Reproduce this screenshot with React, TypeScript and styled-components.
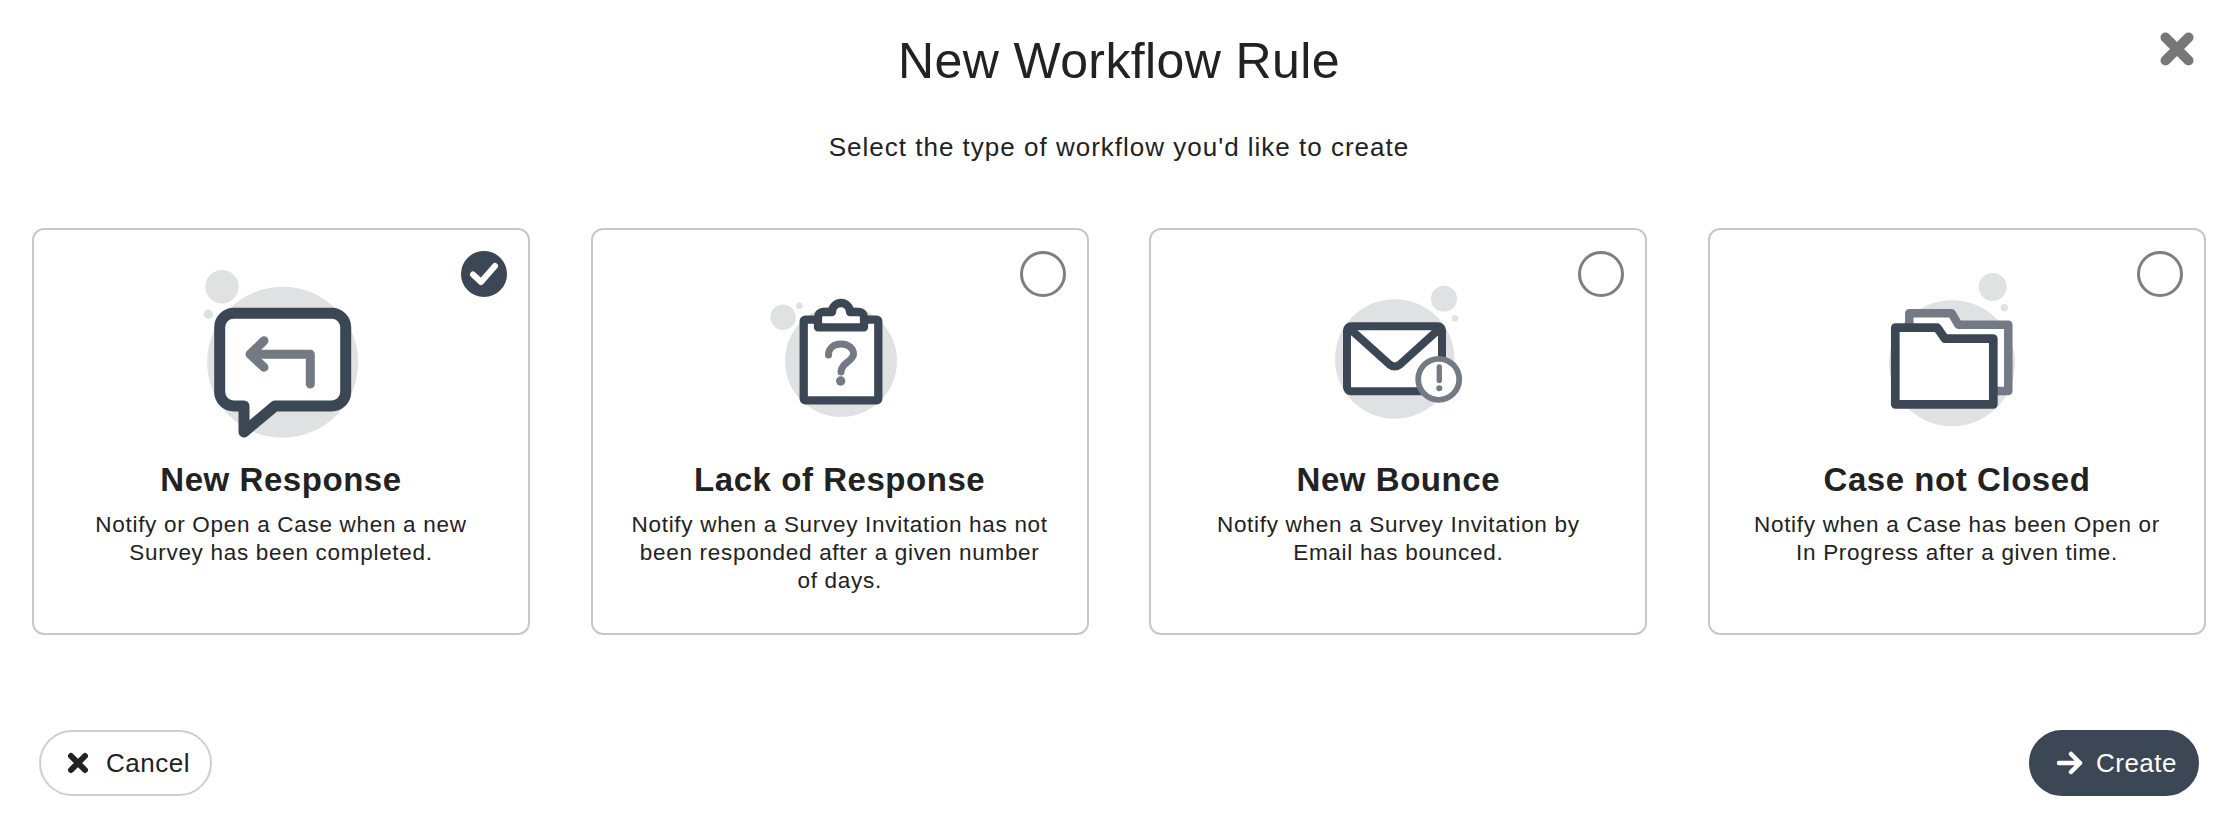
import React from 'react';
import styled, { createGlobalStyle } from 'styled-components';

const dark = '#3b4754';
const mid = '#737a83';
const light = '#dfe1e3';

const GlobalStyle = createGlobalStyle`
  html, body {
    margin: 0;
    padding: 0;
    background: #fff;
  }

  body {
    font-family: "Liberation Sans", Arial, sans-serif;
    color: #222;
  }
`;

const Page = styled.div`
  position: relative;
  width: 2238px;
  height: 822px;
  box-sizing: border-box;
  padding: 0 32px;
  display: flex;
  flex-direction: column;
  overflow: hidden;
`;

const Title = styled.h1`
  margin: 0;
  padding-top: 31px;
  font-size: 50px;
  line-height: 60px;
  font-weight: 400;
  text-align: center;
  letter-spacing: 0.4px;
`;

const Subtitle = styled.p`
  margin: 40px 0 0;
  font-size: 26px;
  line-height: 32px;
  text-align: center;
  letter-spacing: 1px;
`;

const CloseButton = styled.button`
  position: absolute;
  top: 28px;
  right: 40px;
  width: 42px;
  height: 42px;
  padding: 0;
  border: 0;
  background: none;
  display: flex;
  align-items: center;
  justify-content: center;
`;

const Cards = styled.div`
  margin-top: 65px;
  display: grid;
  grid-template-columns: repeat(4, 498px);
  justify-content: space-between;
`;

const Card = styled.div`
  position: relative;
  height: 407px;
  box-sizing: border-box;
  padding: 28px 36px 0;
  border: 2px solid #c8c8c8;
  border-radius: 12px;
  display: flex;
  flex-direction: column;
  align-items: center;
`;

const Art = styled.svg`
  flex: none;
  display: block;
`;

const Radio = styled.span<{ $checked?: boolean }>`
  position: absolute;
  top: 21px;
  right: 21px;
  width: 46px;
  height: 46px;
  box-sizing: border-box;
  border-radius: 50%;
  border: 3px solid ${(p) => (p.$checked ? dark : '#7f7f7f')};
  background: ${(p) => (p.$checked ? dark : '#fff')};
  display: flex;
  align-items: center;
  justify-content: center;
`;

const CardTitle = styled.h2`
  margin: 12px 0 0;
  font-size: 33px;
  line-height: 40px;
  font-weight: 700;
  text-align: center;
  letter-spacing: 0.55px;
`;

const CardText = styled.p`
  margin: 11px 0 0;
  font-size: 22.5px;
  line-height: 28px;
  text-align: center;
  letter-spacing: 0.7px;
`;

const Footer = styled.div`
  margin-top: 95px;
  padding: 0 7px;
  display: flex;
  justify-content: space-between;
  align-items: center;
`;

const Button = styled.button<{ $primary?: boolean }>`
  height: 66px;
  box-sizing: border-box;
  padding: ${(p) => (p.$primary ? '0 20px 0 26px' : '0 20px 0 26px')};
  border-radius: 33px;
  border: 2px solid ${(p) => (p.$primary ? dark : '#cfcfcf')};
  background: ${(p) => (p.$primary ? dark : '#fff')};
  color: ${(p) => (p.$primary ? '#fff' : '#222')};
  font-family: inherit;
  font-size: 26px;
  letter-spacing: 0.5px;
  display: flex;
  align-items: center;
  gap: ${(p) => (p.$primary ? '13px' : '17px')};
`;

const cards = [
  {
    title: 'New Response',
    text: 'Notify or Open a Case when a new Survey has been completed.',
    checked: true,
    art: (
      <>
        <circle cx="121.7" cy="104.3" r="75.5" fill={light} />
        <circle cx="61" cy="28.7" r="16.7" fill={light} />
        <circle cx="47.3" cy="56.3" r="4.7" fill={light} />
        <path
          d="M72.7 55.3H170.7a14 14 0 0 1 14 14V134a14 14 0 0 1-14 14H114L83 174V148H72.7a14 14 0 0 1-14-14V69.3a14 14 0 0 1 14-14Z"
          fill="#fff"
          stroke={dark}
          strokeWidth="11"
          strokeLinejoin="round"
        />
        <path
          d="M103 82.7L89 96.3L103 109.3M89 96.3H149.3V126"
          fill="none"
          stroke={mid}
          strokeWidth="9"
          strokeLinecap="round"
          strokeLinejoin="round"
        />
      </>
    ),
  },
  {
    title: 'Lack of Response',
    text: 'Notify when a Survey Invitation has not been responded after a given number of days.',
    art: (
      <>
        <circle cx="121" cy="103" r="56" fill={light} />
        <circle cx="63" cy="59.3" r="12.7" fill={light} />
        <circle cx="79.3" cy="47.7" r="3.3" fill={light} />
        <rect x="83.7" y="61.7" width="74.6" height="80.6" rx="1.5" fill="#fff" stroke={dark} strokeWidth="8.3" strokeLinejoin="round" />
        <path
          d="M103 54H112a9 9 0 0 1 18 0H139a5 5 0 0 1 5 5V69.3H98V59a5 5 0 0 1 5-5Z"
          fill="#fff"
          stroke={dark}
          strokeWidth="8.3"
          strokeLinejoin="round"
        />
        <path
          d="M108.5 97C108.5 90 114 86 121 86C128 86 133.5 90 133.5 96C133.5 103 121 105 121 114"
          fill="none"
          stroke={mid}
          strokeWidth="7"
          strokeLinecap="round"
        />
        <circle cx="120.7" cy="123" r="4.7" fill={mid} />
      </>
    ),
  },
  {
    title: 'New Bounce',
    text: 'Notify when a Survey Invitation by Email has bounced.',
    art: (
      <>
        <circle cx="116.7" cy="101" r="59.7" fill={light} />
        <circle cx="166" cy="40.7" r="13" fill={light} />
        <circle cx="177" cy="60.3" r="3.3" fill={light} />
        <rect x="69" y="68.3" width="95" height="65" rx="4" fill="#fff" stroke={dark} strokeWidth="8" />
        <path
          d="M71.3 70.3L111.5 106.5Q116.7 110.5 122 106.5L162 70.3"
          fill="none"
          stroke={dark}
          strokeWidth="8"
          strokeLinecap="round"
        />
        <circle cx="160.7" cy="121.3" r="20.5" fill="#fff" stroke={mid} strokeWidth="5.8" />
        <path d="M161.3 109V122.5" fill="none" stroke={mid} strokeWidth="5.3" strokeLinecap="round" />
        <circle cx="161.3" cy="130.3" r="3" fill={mid} />
      </>
    ),
  },
  {
    title: 'Case not Closed',
    text: 'Notify when a Case has been Open or In Progress after a given time.',
    art: (
      <>
        <circle cx="115" cy="105.3" r="63" fill={light} />
        <circle cx="155.7" cy="29" r="14" fill={light} />
        <circle cx="167.3" cy="49.7" r="3.7" fill={light} />
        <path
          d="M72.3 55.3H114.7L121.3 66.7H171.3V133H72.3Z"
          fill="#fff"
          stroke={mid}
          strokeWidth="8.5"
          strokeLinejoin="round"
        />
        <path
          d="M58.3 69.7H100.3L108 80.7H156.3V146.3H58.3Z"
          fill="#fff"
          stroke={dark}
          strokeWidth="8.7"
          strokeLinejoin="round"
        />
      </>
    ),
  },
];

export default function App(): React.ReactElement {
  return (
    <Page>
      <GlobalStyle />
      <Title>New Workflow Rule</Title>
      <CloseButton aria-label="Close">
        <svg width="34" height="34" viewBox="0 0 34 34">
          <path d="M5.5 5.5L28.5 28.5M28.5 5.5L5.5 28.5" stroke="#777" strokeWidth="10" strokeLinecap="round" />
        </svg>
      </CloseButton>
      <Subtitle>Select the type of workflow you'd like to create</Subtitle>
      <Cards>
        {cards.map((card) => (
          <Card key={card.title}>
            <Radio $checked={card.checked}>
              {card.checked && (
                <svg width="30" height="26" viewBox="0 0 30 26">
                  <path d="M4 13.5L12 21L26 5" fill="none" stroke="#fff" strokeWidth="6" strokeLinecap="round" strokeLinejoin="round" />
                </svg>
              )}
            </Radio>
            <Art width="240" height="190" viewBox="0 0 240 190">
              {card.art}
            </Art>
            <CardTitle>{card.title}</CardTitle>
            <CardText>{card.text}</CardText>
          </Card>
        ))}
      </Cards>
      <Footer>
        <Button>
          <svg width="22" height="22" viewBox="0 0 22 22">
            <path d="M4 4L18 18M18 4L4 18" stroke="#222" strokeWidth="6" strokeLinecap="round" />
          </svg>
          Cancel
        </Button>
        <Button $primary>
          <svg width="26" height="24" viewBox="0 0 26 24">
            <path d="M2 12H23M14 3L23 12L14 21" fill="none" stroke="#fff" strokeWidth="4.5" strokeLinecap="round" strokeLinejoin="round" />
          </svg>
          Create
        </Button>
      </Footer>
    </Page>
  );
}
